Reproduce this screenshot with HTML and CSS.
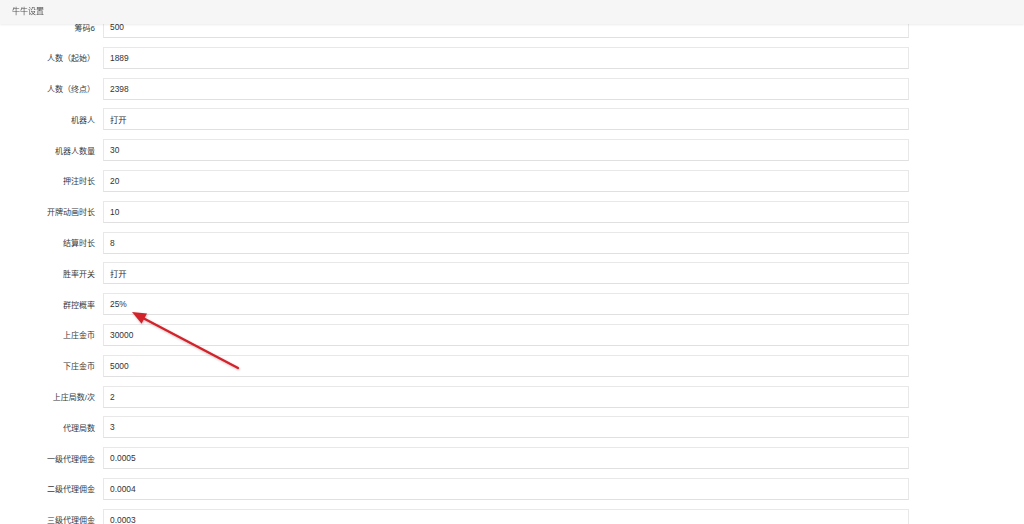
FILE: index.html
```html
<html>
<head>
  <meta charset="utf-8">
  <link rel="stylesheet" href="styles.css">
</head>
<body>
<div class="topbar">牛牛设置</div>

<div class="form">
  <div class="row"><label>筹码6</label><input type="text" value="500"></div>
  <div class="row"><label>人数（起始）</label><input type="text" value="1889"></div>
  <div class="row"><label>人数（终点）</label><input type="text" value="2398"></div>
  <div class="row"><label>机器人</label><input type="text" value="打开"></div>
  <div class="row"><label>机器人数量</label><input type="text" value="30"></div>
  <div class="row"><label>押注时长</label><input type="text" value="20"></div>
  <div class="row"><label>开牌动画时长</label><input type="text" value="10"></div>
  <div class="row"><label>结算时长</label><input type="text" value="8"></div>
  <div class="row"><label>胜率开关</label><input type="text" value="打开"></div>
  <div class="row"><label>群控概率</label><input type="text" value="25%"></div>
  <div class="row"><label>上庄金币</label><input type="text" value="30000"></div>
  <div class="row"><label>下庄金币</label><input type="text" value="5000"></div>
  <div class="row"><label>上庄局数/次</label><input type="text" value="2"></div>
  <div class="row"><label>代理局数</label><input type="text" value="3"></div>
  <div class="row"><label>一级代理佣金</label><input type="text" value="0.0005"></div>
  <div class="row"><label>二级代理佣金</label><input type="text" value="0.0004"></div>
  <div class="row"><label>三级代理佣金</label><input type="text" value="0.0003"></div>
</div>

<!-- annotation arrow drawn over the form -->
<svg class="arrow" width="1024" height="524" viewBox="0 0 1024 524">
  <defs>
    <filter id="soft" x="-20%" y="-20%" width="140%" height="140%">
      <feDropShadow dx="0.5" dy="1" stdDeviation="1" flood-color="#000" flood-opacity="0.25"/>
    </filter>
  </defs>
  <g filter="url(#soft)">
    <line x1="238" y1="368" x2="143" y2="318" stroke="#d3222a" stroke-width="2.4" stroke-linecap="round"/>
    <polygon points="132,312 147,313.6 141.6,323.8" fill="#d3222a"/>
  </g>
</svg>
</body>
</html>
```

FILE: styles.css
```css
/* reset */
*{
  margin:0;
  box-sizing:border-box;
}
body{
  background:#fff;
  font-family:"Liberation Sans","Noto Sans CJK SC",sans-serif;
  font-size:8px;
  color:#333;
  overflow:hidden;
}

.topbar{
  position:fixed;
  top:0;
  left:0;
  right:0;
  height:24px;
  line-height:24px;
  padding-left:12px;
  background:#f6f6f6;
  color:#555;
  box-shadow:0 1px 2px rgba(0,0,0,0.08);
  z-index:10;
}

/* the form rows */
.form{
  display:flex;
  flex-direction:column;
  gap:8.8px;
  padding-top:16px;
}
.row{
  display:flex;
  align-items:center;
  gap:8px;
  height:22px;
}
.row label{
  width:95px;
  text-align:right;
  color:#3a3a3a;
}
.row input{
  width:806px;
  height:22px;
  padding:0 6px;
  border:1px solid #e8e8e8;
  border-bottom-color:#e0e0e0;
  background:#fff;
  font-family:"Liberation Sans","Noto Sans CJK SC",sans-serif;
  font-size:8.4px;
  color:#333;
  outline:none;
}

.arrow{
  position:absolute;
  top:0;
  left:0;
  pointer-events:none;
}
```
